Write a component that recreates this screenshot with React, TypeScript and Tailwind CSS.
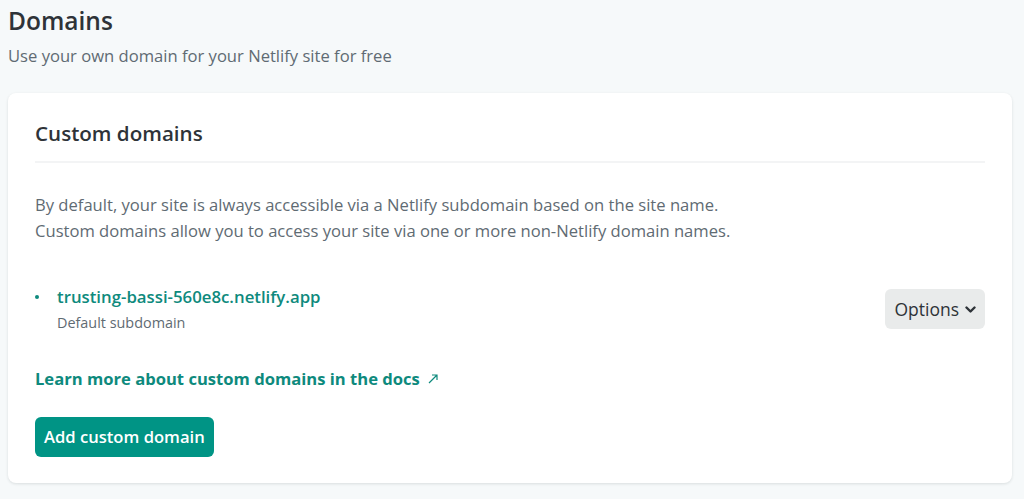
import React from "react";

export default function App() {
  return (
    <div
      className="min-h-[499px] w-full bg-[#f6f9fa] pl-[8px] pr-[12px] pt-[4px] pb-[16px] text-[#2e3338]"
      style={{ fontFamily: '"Open Sans", "Noto Sans", sans-serif' }}
    >
      <h1 className="text-[24.5px] font-semibold leading-[34px] text-[#2e3338]">Domains</h1>
      <p className="mt-[6px] text-[16.6px] leading-[24px] text-[#5f6b73]">
        Use your own domain for your Netlify site for free
      </p>
      <div className="mt-[25px] rounded-[8px] bg-white px-[27px] pt-[20px] pb-[26px] shadow-[0_1px_3px_rgba(14,30,37,0.12)]">
        <h2 className="text-[20.6px] font-semibold leading-[40px] text-[#2e3338]">Custom domains</h2>
        <div className="mt-[8px] h-[2px] bg-[#f3f4f5]" />
        <div className="mt-[29px] text-[16.6px] leading-[26px] text-[#5f6b73]">
          <p>By default, your site is always accessible via a Netlify subdomain based on the site name.</p>
          <p>Custom domains allow you to access your site via one or more non-Netlify domain names.</p>
        </div>
        <div className="mt-[40px] flex items-start justify-between">
          <div className="flex">
            <span className="mt-[11px] mr-[18px] h-[4px] w-[4px] rounded-full bg-[#0e8a7d]" />
            <div>
              <div className="text-[16.8px] font-semibold leading-[26px] text-[#0e8a7d]">
                trusting-bassi-560e8c.netlify.app
              </div>
              <div className="text-[14.4px] leading-[26px] text-[#5f6b73]">Default subdomain</div>
            </div>
          </div>
          <button className="mt-[5px] flex h-[40px] items-center gap-[6px] rounded-[6px] bg-[#e9ebeb] px-[9px] text-[17.5px] text-[#2e3338]">
            Options
            <svg width="11" height="8" viewBox="0 0 11 8" className="mt-[2px]">
              <path d="M1.5 1.5 L5.5 5.5 L9.5 1.5" fill="none" stroke="#2e3338" strokeWidth="2.4" strokeLinecap="round" strokeLinejoin="round" />
            </svg>
          </button>
        </div>
        <div className="mt-[30px] flex items-center text-[16.6px] font-bold leading-[26px] text-[#0e8a7d]">
          Learn more about custom domains in the docs
          <svg width="12" height="12" viewBox="0 0 12 12" className="ml-[7px]">
            <path d="M2 10 L10 2 M5 2 H10 V7" fill="none" stroke="#0e8a7d" strokeWidth="1.2" />
          </svg>
        </div>
        <button className="mt-[25px] h-[40px] rounded-[6px] bg-[#009485] px-[9px] text-[16.6px] font-semibold text-white">
          Add custom domain
        </button>
      </div>
    </div>
  );
}
